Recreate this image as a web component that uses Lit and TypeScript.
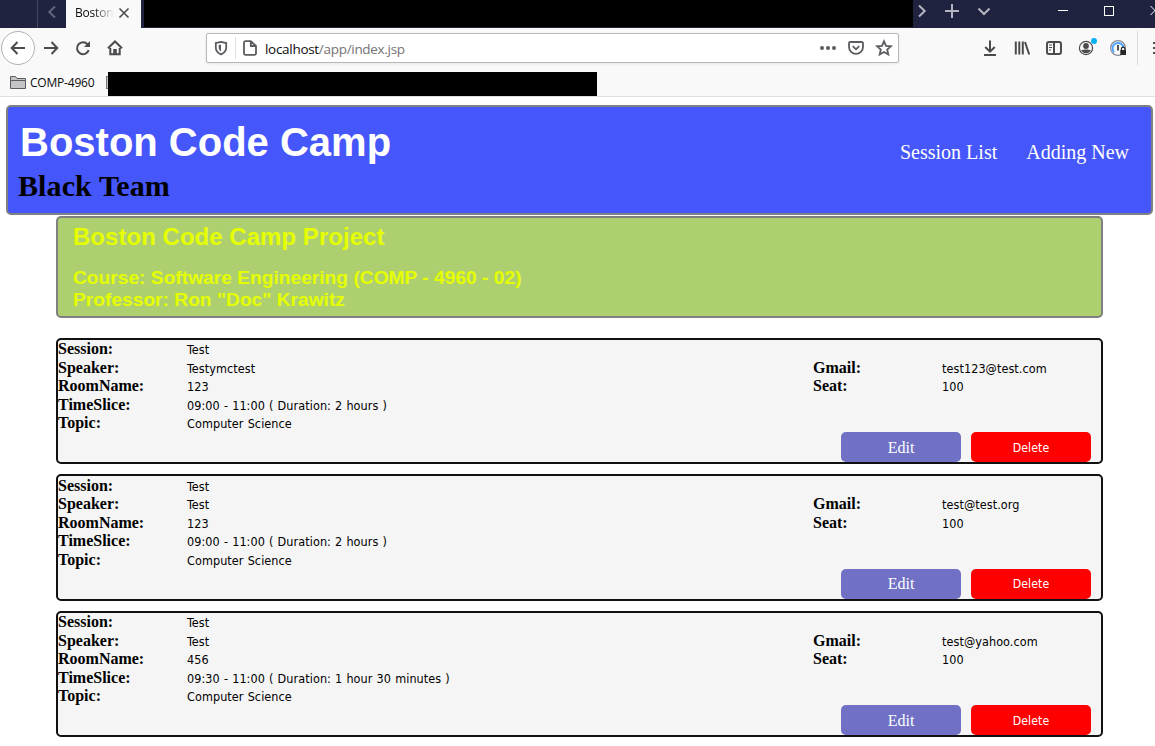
import { LitElement, html, css, svg } from "lit";
import { customElement, property } from "lit/decorators.js";

interface Session {
  session: string;
  speaker: string;
  room: string;
  time: string;
  topic: string;
  gmail: string;
  seat: string;
}

const sessions: Session[] = [
  { session: "Test", speaker: "Testymctest", room: "123", time: "09:00 - 11:00 ( Duration: 2 hours )", topic: "Computer Science", gmail: "test123@test.com", seat: "100" },
  { session: "Test", speaker: "Test", room: "123", time: "09:00 - 11:00 ( Duration: 2 hours )", topic: "Computer Science", gmail: "test@test.org", seat: "100" },
  { session: "Test", speaker: "Test", room: "456", time: "09:30 - 11:00 ( Duration: 1 hour 30 minutes )", topic: "Computer Science", gmail: "test@yahoo.com", seat: "100" },
];

const icons = {
  back: svg`<path d="M15 8H2M7.500 2L1.700 8l5.800 6"/>`,
  forward: svg`<path d="M1 8h13M8.500 2l5.800 6-5.800 6"/>`,
  reload: svg`<path d="M13.700 10.200A6 6 0 1 1 12.600 4.300"/><path d="M15 1v6H9z" fill="currentColor" stroke="none"/>`,
  home: svg`<path d="M1 8.300L8 1.500l7 6.800M3.300 8v6.200h9.400V8"/><path d="M6.200 14V9h3.600v5z" fill="currentColor" stroke="none"/>`,
  shield: svg`<path d="M8 1.800L13.200 3v4.500c0 3.500-2.400 5.700-5.200 6.900-2.800-1.200-5.200-3.400-5.200-6.900V3z"/><path d="M8 4.500v7c-1.600-1-2.300-2.400-2.300-4V5z" fill="currentColor" stroke="none"/>`,
  page: svg`<path d="M3.500 1.200h5.300L14 6v7.300a1.500 1.500 0 0 1-1.500 1.500h-9A1.500 1.500 0 0 1 2 13.300V2.700a1.500 1.500 0 0 1 1.500-1.500zM8.800 1.400V6H14"/>`,
  dots: svg`<g fill="currentColor" stroke="none"><circle cx="2" cy="8" r="2"/><circle cx="8" cy="8" r="2"/><circle cx="14" cy="8" r="2"/></g>`,
  pocket: svg`<path d="M2.200 2h11.600a1.200 1.200 0 0 1 1.200 1.200V7A7 6.800 0 0 1 1 7V3.200A1.200 1.200 0 0 1 2.200 2zM4.800 6.200L8 9.300l3.200-3.100"/>`,
  star: svg`<path d="M8 1.300l2 4.500 4.900.5-3.700 3.300 1.100 4.900L8 12l-4.300 2.500 1.100-4.900L1.100 6.300 6 5.800z"/>`,
  download: svg`<path d="M8 .500v11M3.200 7L8 11.700 12.800 7M2 15h12"/>`,
  library: svg`<path d="M1.800 1.500v13M5.300 1.500v13M8.800 1.500v13M11 2l4.200 12.500"/>`,
  sidebar: svg`<rect x="1" y="2" width="14" height="12" rx="2"/><path d="M8 2v12"/><path d="M3 5h3M3 7.500h3M3 10h2" stroke-width="1"/>`,
  account: svg`<circle cx="8" cy="8" r="6.600" stroke-width="1.200"/><g fill="currentColor" stroke="none"><circle cx="8" cy="6" r="2.900"/><path d="M3.200 10.300c2-1 7.600-1 9.600 0-1 2-2.600 3-4.800 3s-3.800-1-4.800-3z"/></g>`,
  lockRing: svg`<circle cx="8" cy="8" r="7.400" stroke="#8b8b92" stroke-width="1.200"/><path d="M4 12.200A5.500 5.500 0 1 1 13.500 8" stroke="#4aa3ff" stroke-width="2"/><path d="M8 5v5.500" stroke="#555" stroke-width="2"/><path d="M11.400 10V9a1.800 1.800 0 0 1 3.600 0v1" stroke="#27272a" stroke-width="1.200"/><rect x="10.300" y="10" width="5.700" height="5" fill="#27272a" stroke="none"/>`,
  burger: svg`<path d="M1 3h14M1 8h14M1 13h14"/>`,
  left: svg`<path d="M11 2.500L5.300 8l5.700 5.500"/>`,
  right: svg`<path d="M5 2.500L10.700 8 5 13.500"/>`,
  down: svg`<path d="M2.500 5.500L8 11l5.500-5.500"/>`,
  plus: svg`<path d="M8 1v14M1 8h14"/>`,
  cross: svg`<path d="M3.500 3.500l9 9M12.500 3.500l-9 9"/>`,
  minimize: svg`<path d="M3 7.500h10" stroke-width="1"/>`,
  maximize: svg`<rect x="3.500" y="3.500" width="9" height="9" stroke-width="1" shape-rendering="crispEdges"/>`,
  close: svg`<path d="M3.500 3l9 9M12.500 3l-9 9" stroke-width="1"/>`,
  folder: svg`<path d="M.5 13.500v-12h5l1.500 2h8.500v10z" fill="#c4c4c6" stroke-width="1"/><path d="M.5 5.500h15" stroke-width="1"/>`,
};

const glyph = (name: keyof typeof icons) =>
  html`<svg class="icon ${name}" width="16" height="16" viewBox="0 0 16 16">${icons[name]}</svg>`;

const iconStyles = css`
  .icon {
    display: block;
    flex: none;
    fill: none;
    stroke: currentColor;
    stroke-width: 2;
    overflow: visible;
  }
`;

@customElement("browser-chrome")
class BrowserChrome extends LitElement {
  static styles = [
    iconStyles,
    css`
      :host {
        display: block;
        height: 97px;
        box-sizing: border-box;
        border-bottom: 1px solid #e0e0e1;
        background: #f9f9fa;
        color: #4c4c4f;
        font-family: "Open Sans", sans-serif;
        overflow: hidden;
      }
      .tabs {
        display: flex;
        height: 28px;
        background: #202340;
        color: #b4b5c0;
      }
      .tabs > *, .nav > * { flex: none; }
      .scroll {
        display: flex;
        align-items: center;
        box-sizing: border-box;
        width: 29px;
        margin-left: 37px;
        padding: 0 0 5px 6px;
        border-left: 1px solid #454760;
        color: #63657a;
      }
      .tab {
        display: flex;
        align-items: center;
        box-sizing: border-box;
        width: 75px;
        padding: 0 0 3px 9px;
        background: #f9f9fa;
        color: #4c4c4f;
      }
      .title {
        width: 41px;
        overflow: hidden;
        font-size: 12px;
        line-height: 18px;
        letter-spacing: -0.2px;
        color: #0c0c0d;
        -webkit-mask-image: linear-gradient(90deg, #000 45%, transparent 95%);
        mask-image: linear-gradient(90deg, #000 45%, transparent 95%);
      }
      .tab .icon { stroke-width: 1.6; }
      .covered {
        width: 769px;
        height: 27px;
        margin-left: 3px;
        background: #000;
      }
      .controls {
        display: flex;
        align-items: center;
        height: 22px;
        margin-left: 1px;
      }
      .controls .plus { margin-left: 14px; }
      .controls .down { margin-left: 16px; }
      .controls .minimize { margin-left: 63px; }
      .controls .maximize { margin-left: 30px; }
      .controls .close { margin-left: 30px; }
      .window { display: flex; color: #fff; }
      .nav {
        display: flex;
        align-items: center;
        height: 40px;
      }
      .backbtn {
        display: flex;
        align-items: center;
        justify-content: center;
        box-sizing: border-box;
        width: 34px;
        height: 34px;
        margin-left: 1px;
        border: 1px solid #b1b1b3;
        border-radius: 50%;
        background: #fff;
      }
      .nav .forward { margin-left: 8px; }
      .nav .reload { margin-left: 16px; }
      .nav .home { margin-left: 16px; }
      .url {
        display: flex;
        align-items: center;
        box-sizing: border-box;
        width: 693px;
        height: 30px;
        margin-left: 83px;
        padding: 0 6px;
        border: 1px solid #b8b8ba;
        border-radius: 2px;
        background: #fff;
        box-shadow: 0 1px 3px rgba(0, 0, 0, 0.08);
        color: #5c5c60;
      }
      .url .icon { stroke-width: 1.8; }
      .sep {
        width: 1px;
        height: 22px;
        margin: 0 6px;
        background: #e0e0e1;
      }
      .address {
        flex: 1;
        margin-left: 7px;
        padding-top: 2px;
        font-size: 13.5px;
        line-height: 20px;
        color: #737373;
        white-space: nowrap;
        letter-spacing: -0.3px;
      }
      .host { color: #0c0c0d; }
      .url .pocket, .url .star { margin-left: 12px; }
      .nav .download { margin-left: 83px; }
      .nav .library, .nav .sidebar, .nav .lockRing { margin-left: 16px; }
      .user { position: relative; margin-left: 16px; }
      .badge {
        position: absolute;
        top: -2px;
        right: -3px;
        width: 6px;
        height: 6px;
        border-radius: 50%;
        background: #00b3f4;
      }
      .divider {
        width: 1px;
        height: 34px;
        margin: 0 14px 0 11px;
        background: #dcdcdd;
      }
      .bookmarks {
        display: flex;
        align-items: flex-start;
        height: 28px;
        font-size: 12px;
        line-height: 17px;
        color: #0c0c0d;
      }
      .folder { margin: 7px 0 0 10px; color: #5c5c60; }
      .name { width: 66px; margin: 6px 0 0 4px; letter-spacing: -0.2px; white-space: nowrap; }
      .peek {
        box-sizing: border-box;
        width: 2px;
        height: 13px;
        margin: 8px 0 0 10px;
        border: 1px solid #77777a;
        border-right: 0;
        background: #c4c4c6;
      }
      .cover {
        width: 489px;
        height: 24px;
        margin-top: 4px;
        background: #000;
      }
    `,
  ];

  render() {
    return html`
      <div class="tabs">
        <div class="scroll">${glyph("left")}</div>
        <div class="tab"><span class="title">Boston</span>${glyph("cross")}</div>
        <div class="covered"></div>
        <div class="controls">
          ${glyph("right")}${glyph("plus")}${glyph("down")}
          <div class="window">${glyph("minimize")}${glyph("maximize")}${glyph("close")}</div>
        </div>
      </div>
      <div class="nav">
        <div class="backbtn">${glyph("back")}</div>
        ${glyph("forward")}${glyph("reload")}${glyph("home")}
        <div class="url">
          ${glyph("shield")}<span class="sep"></span>${glyph("page")}
          <span class="address"><span class="host">localhost</span>/app/index.jsp</span>
          ${glyph("dots")}${glyph("pocket")}${glyph("star")}
        </div>
        ${glyph("download")}${glyph("library")}${glyph("sidebar")}
        <div class="user">${glyph("account")}<span class="badge"></span></div>
        ${glyph("lockRing")}
        <span class="divider"></span>
        ${glyph("burger")}
      </div>
      <div class="bookmarks">
        ${glyph("folder")}<span class="name">COMP-4960</span>
        <span class="peek"></span><span class="cover"></span>
      </div>
    `;
  }
}

@customElement("session-card")
class SessionCard extends LitElement {
  @property({ attribute: false }) data!: Session;

  static styles = css`
    :host {
      display: block;
      box-sizing: border-box;
      height: 126.5px;
      padding-top: 0.7px;
      border: 2px solid #111;
      border-radius: 5px;
      background: #f5f5f5;
    }
    .row {
      display: grid;
      grid-template-columns: 129px 626px 129px 1fr;
      height: 18.5px;
      white-space: nowrap;
    }
    .label {
      font: bold 16px/18.5px "Liberation Serif", serif;
    }
    .value, .delete {
      font-family: "DejaVu Sans Condensed", "DejaVu Sans", sans-serif;
      font-stretch: condensed;
      font-size: 12.5px;
      letter-spacing: 0.08px;
    }
    .value { line-height: 19px; word-spacing: 0.45px; }
    .actions {
      display: flex;
      justify-content: flex-end;
      gap: 10px;
      margin-top: -0.7px;
      padding-right: 10px;
    }
    .btn {
      box-sizing: border-box;
      width: 120px;
      height: 30px;
      padding: 1.2px 0 0;
      border: 0;
      border-radius: 5px;
      color: #fff;
      text-align: center;
    }
    .edit { background: #7070c4; font: 16px/28px "Liberation Serif", serif; }
    .delete { background: #f00; font-size: 12.2px; line-height: 28px; }
  `;

  render() {
    const d = this.data;
    return html`
      <div class="row"><span class="label">Session:</span><span class="value">${d.session}</span></div>
      <div class="row">
        <span class="label">Speaker:</span><span class="value">${d.speaker}</span>
        <span class="label">Gmail:</span><span class="value">${d.gmail}</span>
      </div>
      <div class="row">
        <span class="label">RoomName:</span><span class="value">${d.room}</span>
        <span class="label">Seat:</span><span class="value">${d.seat}</span>
      </div>
      <div class="row"><span class="label">TimeSlice:</span><span class="value">${d.time}</span></div>
      <div class="row"><span class="label">Topic:</span><span class="value">${d.topic}</span></div>
      <div class="actions">
        <button class="btn edit">Edit</button>
        <button class="btn delete">Delete</button>
      </div>
    `;
  }
}

@customElement("app-root")
class AppRoot extends LitElement {
  static styles = css`
    :host {
      display: block;
      height: 746px;
      overflow: hidden;
      background: #fff;
      color: #000;
      font-family: "Liberation Serif", serif;
    }
    .banner {
      display: flex;
      justify-content: space-between;
      box-sizing: border-box;
      width: 1147px;
      height: 110px;
      margin: 8px 0 0 6px;
      padding: 12px 22px 0 10px;
      border: 2px solid #808080;
      border-radius: 5px;
      background: #4556fb;
    }
    h1, h2, h3, p { margin: 0; }
    h1 {
      padding-left: 2px;
      font: bold 40px/46px "Liberation Sans", sans-serif;
      color: #fff;
    }
    h2 {
      margin-top: 4px;
      font: bold 30px/34px "Liberation Serif", serif;
      letter-spacing: 0.1px;
    }
    .links {
      display: flex;
      gap: 29px;
      padding-top: 22px;
      font-size: 20px;
      line-height: 23px;
      color: #fff;
    }
    .project {
      box-sizing: border-box;
      width: 1047px;
      height: 102px;
      margin: 1px 0 19.6px 56px;
      padding: 5px 15px 0;
      border: 2px solid #808080;
      border-radius: 5px;
      background: #adcf70;
      color: #e6ff00;
      font-family: "Liberation Sans", sans-serif;
      font-weight: bold;
    }
    h3 { font-size: 24px; line-height: 27px; letter-spacing: 0.03px; }
    .course { margin-top: 17px; font-size: 19.2px; line-height: 22px; }
    .list {
      display: flex;
      flex-direction: column;
      gap: 10px;
      width: 1047px;
      margin-left: 56px;
    }
  `;

  render() {
    return html`
      <browser-chrome></browser-chrome>
      <header class="banner">
        <div>
          <h1>Boston Code Camp</h1>
          <h2>Black Team</h2>
        </div>
        <nav class="links"><span>Session List</span><span>Adding New</span></nav>
      </header>
      <section class="project">
        <h3>Boston Code Camp Project</h3>
        <div class="course">
          <p>Course: Software Engineering (COMP - 4960 - 02)</p>
          <p>Professor: Ron "Doc" Krawitz</p>
        </div>
      </section>
      <main class="list">
        ${sessions.map((s) => html`<session-card .data=${s}></session-card>`)}
      </main>
    `;
  }
}
